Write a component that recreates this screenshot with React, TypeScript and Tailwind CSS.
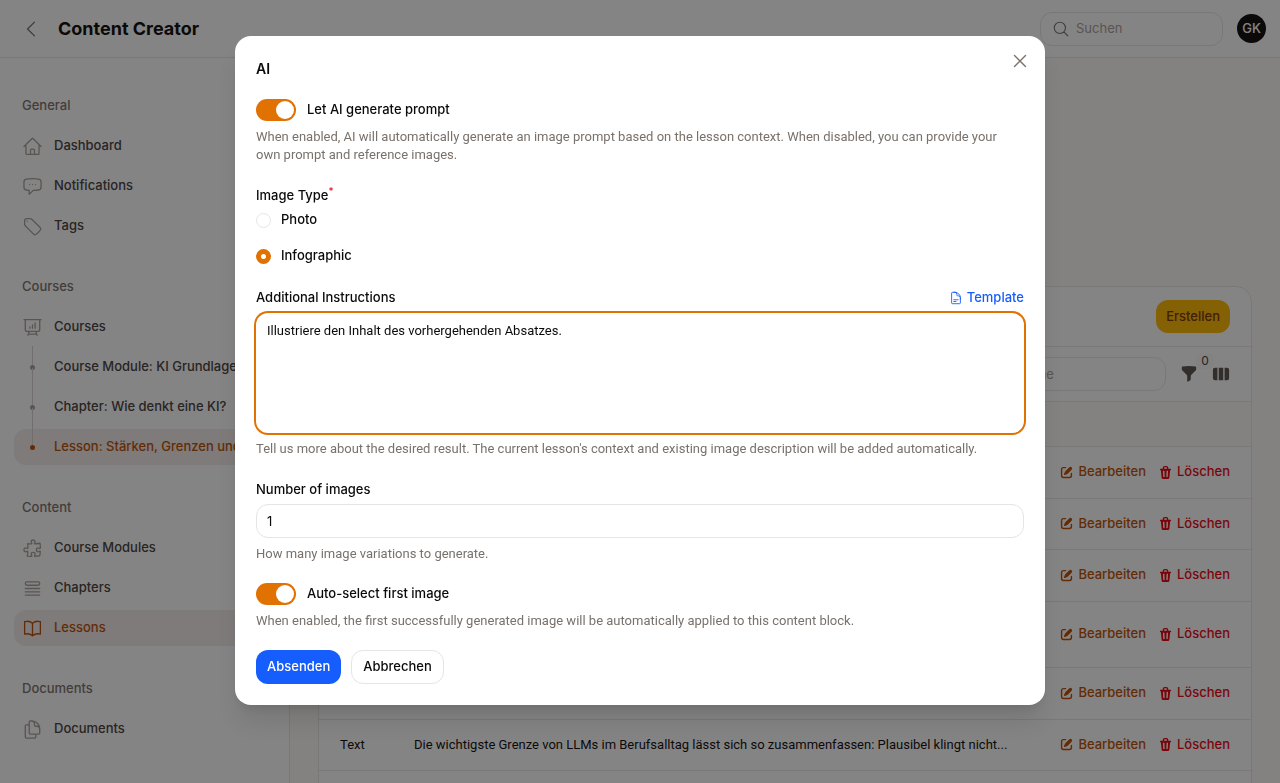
import type { ReactNode } from 'react';
import { useState } from 'react';

type IconProps = { className?: string; children: ReactNode };

function Icon({ className = 'size-5', children }: IconProps) {
  return (
    <svg
      viewBox="0 0 24 24"
      fill="none"
      stroke="currentColor"
      strokeWidth={1.5}
      strokeLinecap="round"
      strokeLinejoin="round"
      className={`shrink-0 ${className}`}
      aria-hidden="true"
    >
      {children}
    </svg>
  );
}

const icons = {
  home: (
    <path d="m2.25 12 8.954-8.955c.44-.439 1.152-.439 1.591 0L21.75 12M4.5 9.75v10.125c0 .621.504 1.125 1.125 1.125H9.75v-4.875c0-.621.504-1.125 1.125-1.125h2.25c.621 0 1.125.504 1.125 1.125V21h4.125c.621 0 1.125-.504 1.125-1.125V9.75M8.25 21h8.25" />
  ),
  chat: (
    <path d="M8.625 9.75h.01m3.365 0h.01m3.365 0h.01M2.25 12.76c0 1.6 1.123 2.994 2.707 3.227 1.087.16 2.185.283 3.293.369V21l4.184-4.183a1.14 1.14 0 0 1 .778-.332 48.294 48.294 0 0 0 5.83-.498c1.585-.233 2.708-1.626 2.708-3.228V6.741c0-1.602-1.123-2.995-2.707-3.228A48.394 48.394 0 0 0 12 3c-2.392 0-4.744.175-7.043.513C3.373 3.746 2.25 5.14 2.25 6.741v6.018Z" />
  ),
  tag: (
    <>
      <path d="M9.568 3H5.25A2.25 2.25 0 0 0 3 5.25v4.318c0 .597.237 1.17.659 1.591l9.581 9.581c.699.699 1.78.872 2.607.33a18.095 18.095 0 0 0 5.223-5.223c.542-.827.369-1.908-.33-2.607L11.16 3.66A2.25 2.25 0 0 0 9.568 3Z" />
      <path d="M6 6h.008v.008H6V6Z" />
    </>
  ),
  presentation: (
    <path d="M3.75 3v11.25A2.25 2.25 0 0 0 6 16.5h2.25M3.75 3h-1.5m1.5 0h16.5m0 0h1.5m-1.5 0v11.25A2.25 2.25 0 0 1 18 16.5h-2.25m-7.5 0h7.5m-7.5 0-1 3m8.5-3 1 3m0 0 .5 1.5m-.5-1.5h-9.5m0 0-.5 1.5M9 11.25v1.5M12 9v3.75m3-6v6" />
  ),
  puzzle: (
    <path d="M14.25 6.087c0-.355.186-.676.401-.959.221-.29.349-.634.349-1.003 0-1.036-1.007-1.875-2.25-1.875s-2.25.84-2.25 1.875c0 .369.128.713.349 1.003.215.283.401.604.401.959a.64.64 0 0 1-.657.643 48.39 48.39 0 0 1-4.163-.3c.186 1.613.293 3.25.315 4.907a.656.656 0 0 1-.658.663c-.355 0-.676-.186-.959-.401a1.647 1.647 0 0 0-1.003-.349c-1.036 0-1.875 1.007-1.875 2.25s.84 2.25 1.875 2.25c.369 0 .713-.128 1.003-.349.283-.215.604-.401.959-.401.31 0 .555.26.532.57a48.039 48.039 0 0 1-.642 5.056c1.518.19 3.058.309 4.616.354a.64.64 0 0 0 .657-.643c0-.355-.186-.676-.401-.959a1.647 1.647 0 0 1-.349-1.003c0-1.035 1.008-1.875 2.25-1.875 1.243 0 2.25.84 2.25 1.875 0 .369-.128.713-.349 1.003-.215.283-.4.604-.4.959 0 .333.277.599.61.58a48.1 48.1 0 0 0 5.427-.63 48.05 48.05 0 0 0 .582-4.717.532.532 0 0 0-.533-.57c-.355 0-.676.186-.959.401-.29.221-.634.349-1.003.349-1.035 0-1.875-1.007-1.875-2.25s.84-2.25 1.875-2.25c.37 0 .713.128 1.003.349.283.215.604.401.96.401a.656.656 0 0 0 .658-.663 48.422 48.422 0 0 0-.37-5.36c-1.886.342-3.81.574-5.766.689a.578.578 0 0 1-.61-.58Z" />
  ),
  list: (
    <path d="M3.75 12h16.5m-16.5 3.75h16.5M3.75 19.5h16.5M5.625 4.5h12.75a1.875 1.875 0 0 1 0 3.75H5.625a1.875 1.875 0 0 1 0-3.75Z" />
  ),
  book: (
    <path d="M12 6.042A8.967 8.967 0 0 0 6 3.75c-1.052 0-2.062.18-3 .512v14.25A8.987 8.987 0 0 1 6 18c2.305 0 4.408.867 6 2.292m0-14.25a8.966 8.966 0 0 1 6-2.292c1.052 0 2.062.18 3 .512v14.25A8.987 8.987 0 0 0 18 18a8.967 8.967 0 0 0-6 2.292m0-14.25v14.25" />
  ),
  documents: (
    <path d="M15.75 17.25v3.375c0 .621-.504 1.125-1.125 1.125h-9.75a1.125 1.125 0 0 1-1.125-1.125V7.875c0-.621.504-1.125 1.125-1.125H6.75a9.06 9.06 0 0 1 1.5.124m7.5 10.376h3.375c.621 0 1.125-.504 1.125-1.125V11.25c0-4.46-3.243-8.161-7.5-8.876a9.06 9.06 0 0 0-1.5-.124H9.375c-.621 0-1.125.504-1.125 1.125v3.5m7.5 10.375H9.375a1.125 1.125 0 0 1-1.125-1.125v-9.25m12 6.625v-1.875a3.375 3.375 0 0 0-3.375-3.375h-1.5a1.125 1.125 0 0 1-1.125-1.125v-1.5a3.375 3.375 0 0 0-3.375-3.375H9.75" />
  ),
  document: (
    <path d="M19.5 14.25v-2.625a3.375 3.375 0 0 0-3.375-3.375h-1.5A1.125 1.125 0 0 1 13.5 7.125v-1.5a3.375 3.375 0 0 0-3.375-3.375H8.25m0 12.75h7.5m-7.5 3H12M10.5 2.25H5.625c-.621 0-1.125.504-1.125 1.125v17.25c0 .621.504 1.125 1.125 1.125h12.75c.621 0 1.125-.504 1.125-1.125V11.25a9 9 0 0 0-9-9Z" />
  ),
  search: <path d="m21 21-5.197-5.197m0 0A7.5 7.5 0 1 0 5.196 5.196a7.5 7.5 0 0 0 10.607 10.607Z" />,
  close: <path d="M6 18 18 6M6 6l12 12" />,
  back: <path d="M15.75 19.5 8.25 12l7.5-7.5" />,
};

type NavItem = { label: string; icon?: ReactNode; active?: boolean; first?: boolean };

const navigation: { title: string; items: NavItem[] }[] = [
  {
    title: 'General',
    items: [
      { label: 'Dashboard', icon: icons.home },
      { label: 'Notifications', icon: icons.chat },
      { label: 'Tags', icon: icons.tag },
    ],
  },
  {
    title: 'Courses',
    items: [
      { label: 'Courses', icon: icons.presentation },
      { label: 'Course Module: KI Grundlagen', first: true },
      { label: 'Chapter: Wie denkt eine KI?' },
      { label: 'Lesson: Stärken, Grenzen und', active: true },
    ],
  },
  {
    title: 'Content',
    items: [
      { label: 'Course Modules', icon: icons.puzzle },
      { label: 'Chapters', icon: icons.list },
      { label: 'Lessons', icon: icons.book, active: true },
    ],
  },
  {
    title: 'Documents',
    items: [{ label: 'Documents', icon: icons.documents }],
  },
];

const rows = [
  { type: '', content: '', height: 'h-[52px]' },
  { type: '', content: '', height: 'h-[51px]' },
  { type: '', content: '', height: 'h-[52px]' },
  { type: '', content: '', height: 'h-[66px]' },
  { type: '', content: '', height: 'h-[52px]' },
  {
    type: 'Text',
    content: 'Die wichtigste Grenze von LLMs im Berufsalltag lässt sich so zusammenfassen: Plausibel klingt nicht...',
    height: 'h-[51px]',
  },
];

function Topbar() {
  return (
    <header className="flex h-[58px] shrink-0 items-center justify-between border-b border-stone-200 bg-white pr-[14px] pl-5">
      <div className="flex items-center gap-4">
        <button type="button" aria-label="Zurück" className="text-stone-500">
          <Icon className="size-[22px]">{icons.back}</Icon>
        </button>
        <h1 className="text-lg font-bold text-stone-950">Content Creator</h1>
      </div>
      <div className="flex items-center gap-[14px]">
        <label className="flex h-[34px] w-[183px] items-center gap-[6px] rounded-xl border border-stone-200 bg-white px-[11px] text-stone-500">
          <Icon className="size-[18px]">{icons.search}</Icon>
          <input
            type="search"
            aria-label="Suchen"
            placeholder="Suchen"
            className="w-full min-w-0 bg-transparent outline-none placeholder:text-stone-400"
          />
        </label>
        <button type="button" className="size-[29px] rounded-full bg-stone-950 text-[13px] font-medium text-white">
          GK
        </button>
      </div>
    </header>
  );
}

function NavLink({ item }: { item: NavItem }) {
  return (
    <a
      href="#"
      className={`flex h-9 items-center gap-[11px] rounded-xl px-2 font-medium ${
        item.active ? 'bg-[#f0edeb] text-amber-700' : 'text-stone-700'
      }`}
    >
      {item.icon ? (
        <Icon className={`size-[21px] ${item.active ? '' : 'text-stone-400'}`}>{item.icon}</Icon>
      ) : (
        <span className="relative flex size-[21px] shrink-0 items-center justify-center">
          <span
            className={`absolute bottom-[10px] left-[10px] w-px bg-stone-300 ${item.first ? 'h-[22px]' : 'h-10'}`}
          />
          <span className={`relative size-[5px] rounded-full ${item.active ? 'bg-amber-700' : 'bg-stone-400'}`} />
        </span>
      )}
      <span className="truncate">{item.label}</span>
    </a>
  );
}

function Sidebar() {
  return (
    <nav className="flex w-[290px] shrink-0 flex-col gap-[25px] overflow-hidden border-r border-stone-200 bg-white px-[14px] pt-[30px]">
      {navigation.map((group) => (
        <section key={group.title} className="flex flex-col gap-1">
          <h2 className="flex h-9 items-center px-2 font-medium text-stone-500">{group.title}</h2>
          <ul className="flex flex-col gap-1">
            {group.items.map((item) => (
              <li key={item.label}>
                <NavLink item={item} />
              </li>
            ))}
          </ul>
        </section>
      ))}
    </nav>
  );
}

function RowActions() {
  return (
    <div className="flex items-center justify-end gap-3 font-medium">
      <button type="button" className="flex items-center gap-1 text-amber-700">
        <svg viewBox="0 0 16 16" fill="currentColor" className="size-[15px]" aria-hidden="true">
          <path d="M13.488 2.513a1.75 1.75 0 0 0-2.475 0L6.75 6.774a2.75 2.75 0 0 0-.596.892l-.848 2.047a.75.75 0 0 0 .98.98l2.047-.848a2.75 2.75 0 0 0 .892-.596l4.261-4.262a1.75 1.75 0 0 0 0-2.474Z" />
          <path d="M4.75 3.5c-.69 0-1.25.56-1.25 1.25v6.5c0 .69.56 1.25 1.25 1.25h6.5c.69 0 1.25-.56 1.25-1.25V9A.75.75 0 0 1 14 9v2.25A2.75 2.75 0 0 1 11.25 14h-6.5A2.75 2.75 0 0 1 2 11.25v-6.5A2.75 2.75 0 0 1 4.75 2H7a.75.75 0 0 1 0 1.5H4.75Z" />
        </svg>
        Bearbeiten
      </button>
      <button type="button" className="flex items-center gap-1 text-red-600">
        <svg viewBox="0 0 16 16" fill="currentColor" className="size-[15px]" aria-hidden="true">
          <path
            fillRule="evenodd"
            clipRule="evenodd"
            d="M5 3.25V4H2.75a.75.75 0 0 0 0 1.5h.3l.815 8.15A1.5 1.5 0 0 0 5.357 15h5.285a1.5 1.5 0 0 0 1.493-1.35l.815-8.15h.3a.75.75 0 0 0 0-1.5H11v-.75A2.25 2.25 0 0 0 8.75 1h-1.5A2.25 2.25 0 0 0 5 3.25Zm2.25-.75a.75.75 0 0 0-.75.75V4h3v-.75a.75.75 0 0 0-.75-.75h-1.5ZM6.05 6a.75.75 0 0 1 .787.713l.275 5.5a.75.75 0 0 1-1.498.075l-.275-5.5A.75.75 0 0 1 6.05 6Zm3.9 0a.75.75 0 0 1 .712.787l-.275 5.5a.75.75 0 0 1-1.498-.075l.275-5.5a.75.75 0 0 1 .786-.711Z"
          />
        </svg>
        Löschen
      </button>
    </div>
  );
}

function ContentTable() {
  return (
    <section className="overflow-hidden rounded-2xl border border-stone-200 bg-white">
      <div className="flex h-[60px] items-center justify-end border-b border-stone-200 px-[21px]">
        <button type="button" className="h-[33px] rounded-xl bg-[#ffb900] px-[10px] font-medium text-amber-900">
          Erstellen
        </button>
      </div>
      <div className="flex h-[55px] items-center justify-end gap-[14px] border-b border-stone-200 px-[21px]">
        <input
          type="search"
          aria-label="Suche"
          placeholder="Suche"
          className="h-[34px] w-[184px] rounded-xl border border-stone-200 px-8 placeholder:text-stone-400"
        />
        <button type="button" aria-label="Filter" className="relative text-stone-600">
          <svg viewBox="0 0 20 20" fill="currentColor" className="size-[18px]" aria-hidden="true">
            <path d="M2.63 1.6C5.03 1.2 7.49 1 10 1s4.97.2 7.37.6A.75.75 0 0 1 18 2.34v2.29a2.25 2.25 0 0 1-.66 1.59l-4.68 4.68A2.25 2.25 0 0 0 12 12.5v3.04a2.25 2.25 0 0 1-1.24 2.01l-1.68.84A.75.75 0 0 1 8 17.75V12.5a2.25 2.25 0 0 0-.66-1.6L2.66 6.22A2.25 2.25 0 0 1 2 4.63V2.34a.75.75 0 0 1 .63-.74Z" />
          </svg>
          <span className="absolute -top-3 left-4 h-4 w-[18px] rounded-md bg-stone-50 text-center text-xs text-stone-700">
            0
          </span>
        </button>
        <button type="button" aria-label="Spalten" className="text-stone-600">
          <svg viewBox="0 0 20 20" fill="currentColor" className="size-[18px]" aria-hidden="true">
            <path d="M14 17h2.75A2.25 2.25 0 0 0 19 14.75v-9.5A2.25 2.25 0 0 0 16.75 3H14v14ZM12.5 3h-5v14h5V3ZM3.25 3H6v14H3.25A2.25 2.25 0 0 1 1 14.75v-9.5A2.25 2.25 0 0 1 3.25 3Z" />
          </svg>
        </button>
      </div>
      <table className="w-full table-fixed border-collapse text-left text-stone-950">
        <thead>
          <tr className="h-[44px] border-b border-stone-200 bg-stone-50">
            <th className="w-[85px]" />
            <th />
            <th className="w-[210px]" />
          </tr>
        </thead>
        <tbody>
          {rows.map((row, index) => (
            <tr key={index} className={`border-b border-stone-200 ${row.height}`}>
              <td className="pl-[21px] font-['Roboto',sans-serif]">{row.type}</td>
              <td className="truncate pl-[10px] font-['Roboto',sans-serif]">{row.content}</td>
              <td className="pr-[21px]">
                <RowActions />
              </td>
            </tr>
          ))}
          <tr className="h-[52px]">
            <td colSpan={3} />
          </tr>
        </tbody>
      </table>
    </section>
  );
}

function Hint({ children }: { children: ReactNode }) {
  return <p className="mt-[7px] font-['Roboto',sans-serif] leading-[18px] text-stone-500">{children}</p>;
}

type ToggleProps = { label: string; hint: string; checked: boolean; onChange: (value: boolean) => void };

function Toggle({ label, hint, checked, onChange }: ToggleProps) {
  return (
    <div>
      <label className="flex h-[22px] items-center gap-[11px] font-medium">
        <span className="relative h-[22px] w-10">
          <input
            type="checkbox"
            role="switch"
            checked={checked}
            onChange={(event) => onChange(event.target.checked)}
            className="h-[22px] w-10 appearance-none rounded-full bg-stone-200 checked:bg-[#e17100]"
          />
          <span
            className={`pointer-events-none absolute top-[2px] size-[18px] rounded-full bg-white ${checked ? 'right-[2px]' : 'left-[2px]'}`}
          />
        </span>
        {label}
      </label>
      <Hint>{hint}</Hint>
    </div>
  );
}

function AiDialog() {
  const [generatePrompt, setGeneratePrompt] = useState(true);
  const [autoSelect, setAutoSelect] = useState(true);
  const [imageType, setImageType] = useState('Infographic');

  return (
    <div className="fixed inset-0 flex items-start justify-center bg-stone-950/50 px-4 pt-9">
      <div
        role="dialog"
        aria-modal="true"
        aria-labelledby="dialog-title"
        className="relative w-full max-w-[810px] rounded-2xl bg-white p-[21px] text-stone-950 shadow-xl"
      >
        <button type="button" aria-label="Schließen" className="absolute top-[14px] right-[14px] text-stone-500">
          <Icon className="size-[22px]">{icons.close}</Icon>
        </button>
        <h2 id="dialog-title" className="text-sm leading-6 font-semibold">
          AI
        </h2>
        <form className="mt-[18px]">
          <Toggle
            label="Let AI generate prompt"
            hint="When enabled, AI will automatically generate an image prompt based on the lesson context. When disabled, you can provide your own prompt and reference images."
            checked={generatePrompt}
            onChange={setGeneratePrompt}
          />
          <fieldset className="mt-5">
            <legend className="h-[22px] leading-[22px] font-medium">
              Image Type<sup className="text-red-600">*</sup>
            </legend>
            <div className="mt-[5px] flex flex-col gap-[18px]">
              {['Photo', 'Infographic'].map((type) => (
                <label key={type} className="flex h-[18px] items-center gap-[10px] font-medium">
                  <input
                    type="radio"
                    name="image-type"
                    checked={imageType === type}
                    onChange={() => setImageType(type)}
                    className="size-[15px] appearance-none rounded-full border border-stone-200 bg-white checked:border-[5px] checked:border-[#e17100]"
                  />
                  {type}
                </label>
              ))}
            </div>
          </fieldset>
          <div className="mt-[22px]">
            <div className="flex h-[22px] items-center justify-between font-medium">
              <label htmlFor="instructions">Additional Instructions</label>
              <button type="button" className="flex items-center gap-1 text-[#155dfc]">
                <Icon className="size-[14px]">{icons.document}</Icon>
                Template
              </button>
            </div>
            <textarea
              id="instructions"
              defaultValue="Illustriere den Inhalt des vorhergehenden Absatzes."
              className="mt-1 block h-[120px] w-full resize-none rounded-xl px-[11px] py-[7px] font-['Roboto',sans-serif] leading-[22px] ring-2 ring-[#e17100] outline-none"
            />
            <Hint>
              Tell us more about the desired result. The current lesson&apos;s context and existing image description
              will be added automatically.
            </Hint>
          </div>
          <div className="mt-5">
            <label htmlFor="image-count" className="block h-[22px] leading-[22px] font-medium">
              Number of images
            </label>
            <input
              id="image-count"
              inputMode="numeric"
              defaultValue="1"
              className="mt-1 block h-[34px] w-full rounded-xl border border-stone-200 px-[10px] outline-none"
            />
            <Hint>How many image variations to generate.</Hint>
          </div>
          <div className="mt-5">
            <Toggle
              label="Auto-select first image"
              hint="When enabled, the first successfully generated image will be automatically applied to this content block."
              checked={autoSelect}
              onChange={setAutoSelect}
            />
          </div>
          <div className="mt-5 flex items-center gap-[10px] font-medium">
            <button type="submit" className="h-[34px] rounded-xl bg-[#155dfc] px-[11px] text-white">
              Absenden
            </button>
            <button type="button" className="h-[34px] rounded-xl border border-stone-200 px-[11px]">
              Abbrechen
            </button>
          </div>
        </form>
      </div>
    </div>
  );
}

export default function App() {
  return (
    <div className="flex h-screen flex-col overflow-hidden bg-stone-50 font-['Inter',sans-serif] text-[13px]">
      <Topbar />
      <div className="flex min-h-0 flex-1">
        <Sidebar />
        <main className="min-w-0 flex-1 overflow-hidden px-7 pt-[228px]">
          <ContentTable />
        </main>
      </div>
      <AiDialog />
    </div>
  );
}
